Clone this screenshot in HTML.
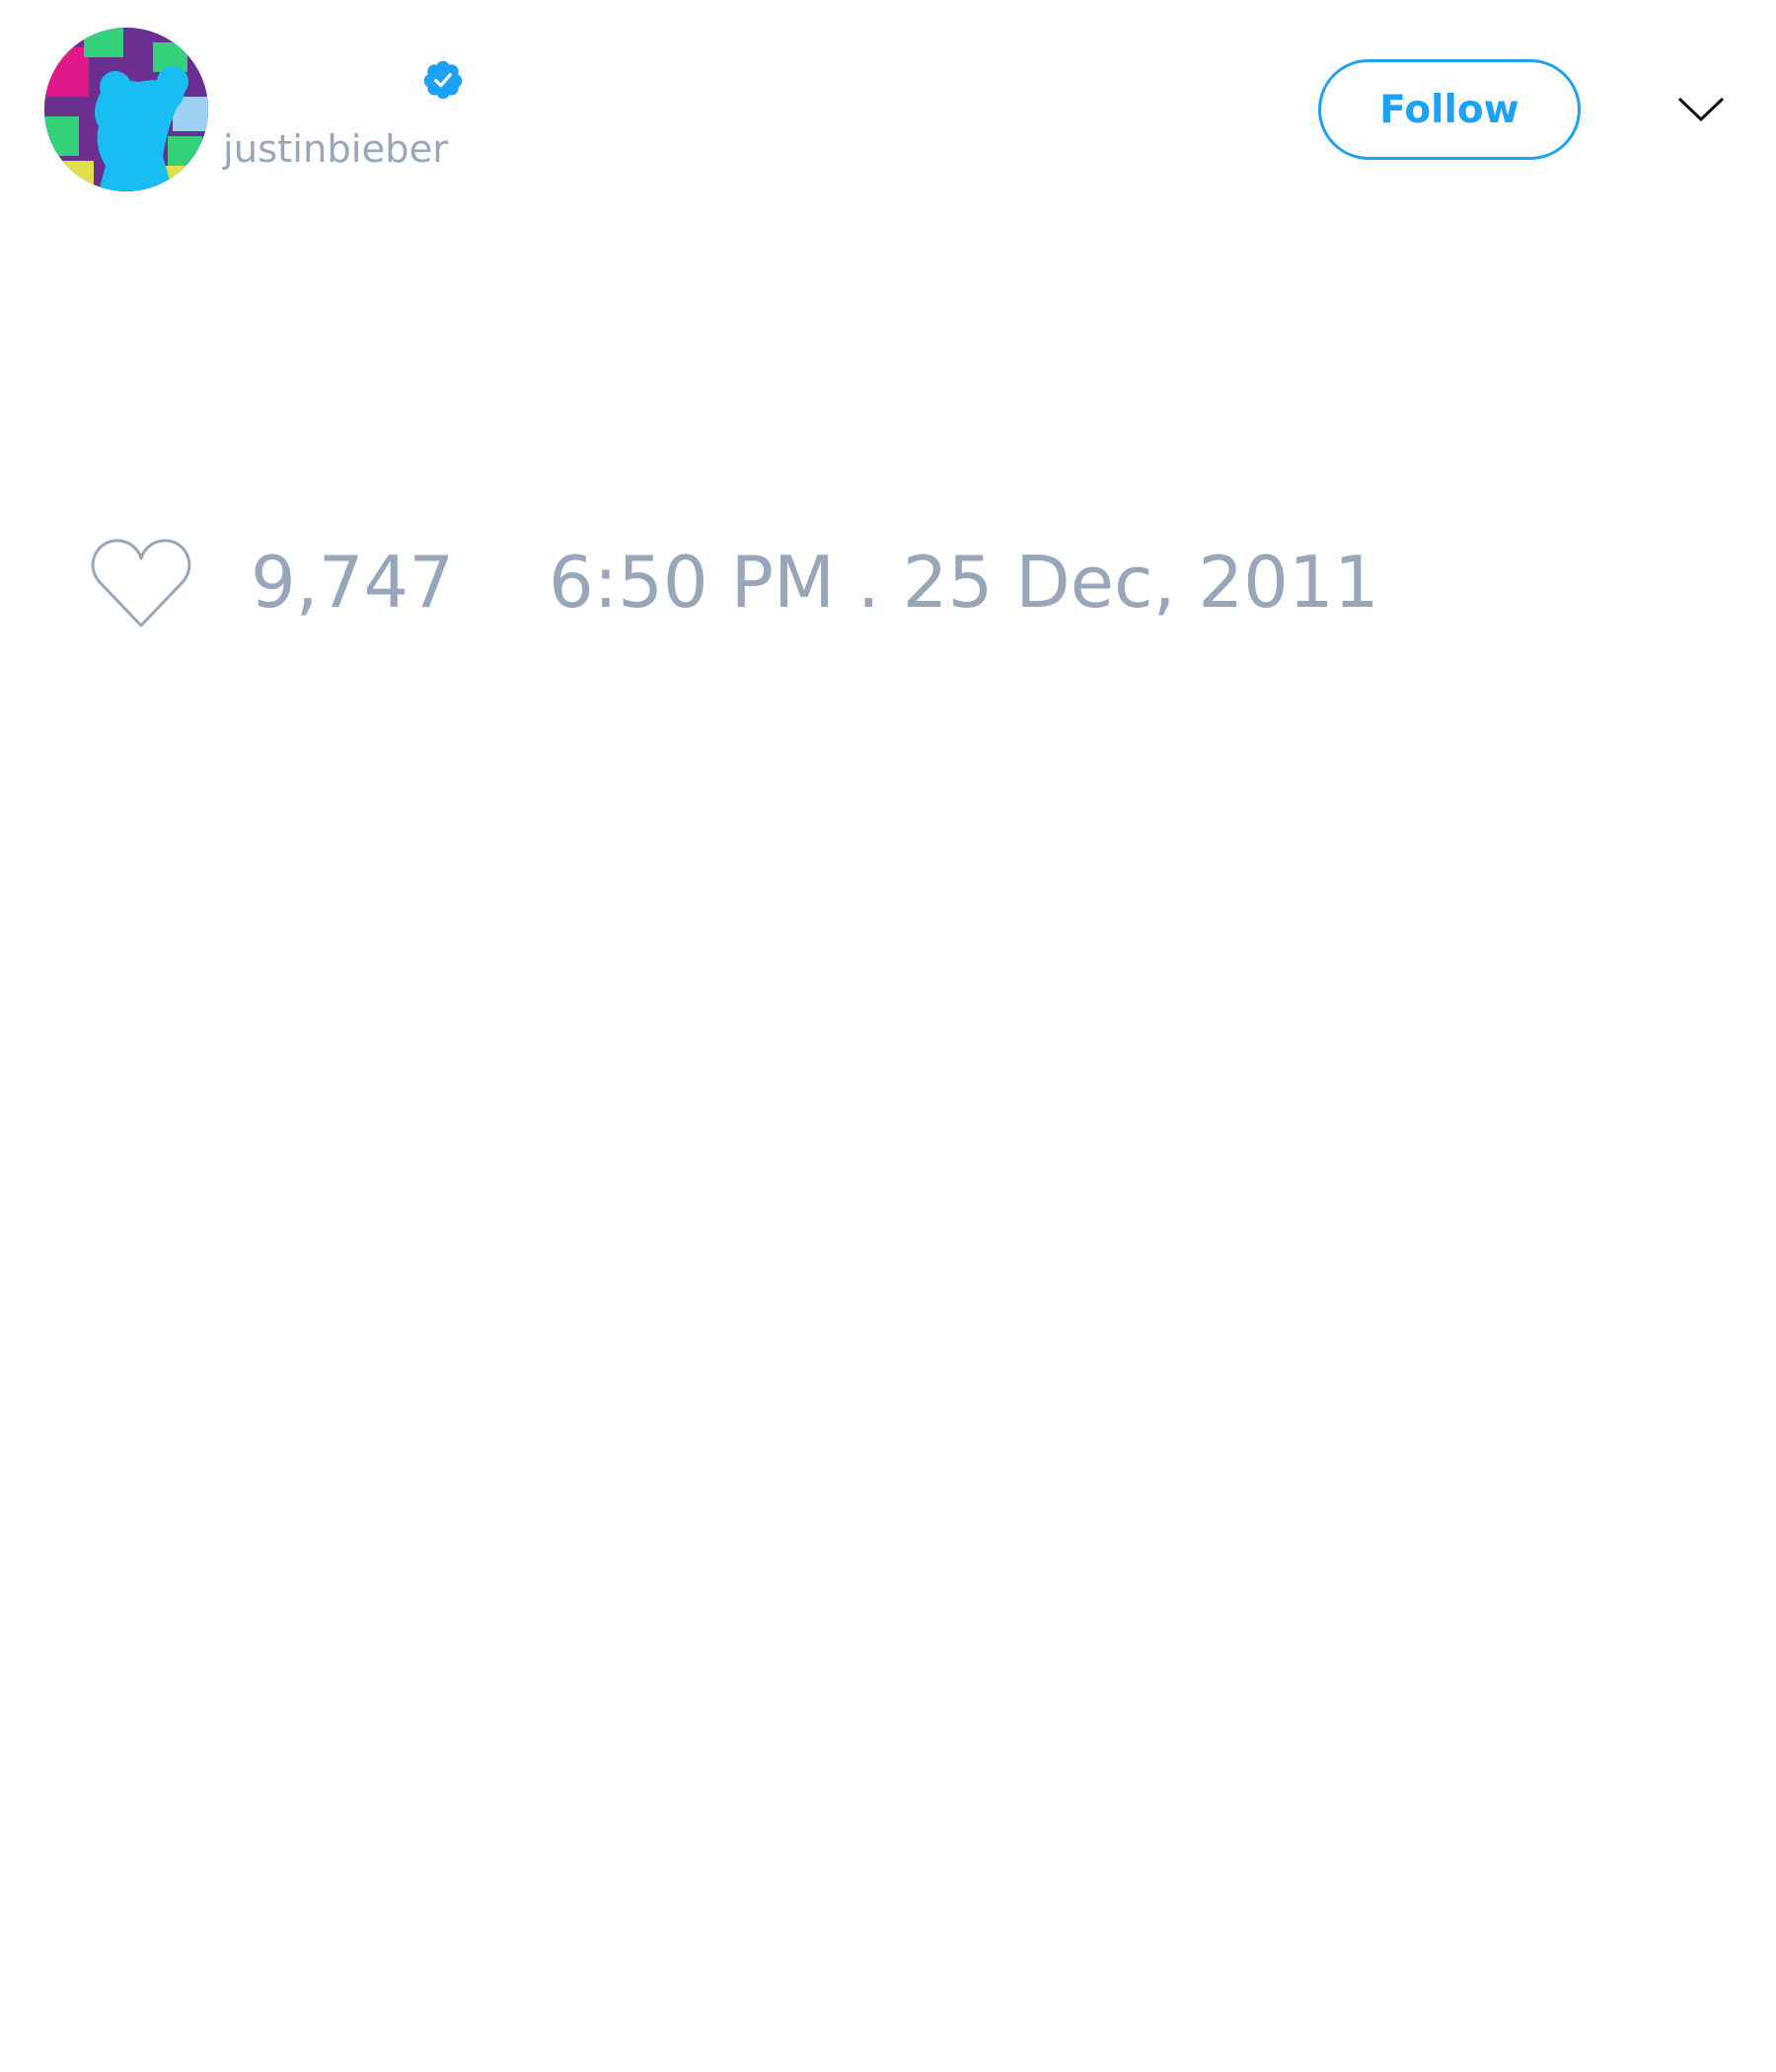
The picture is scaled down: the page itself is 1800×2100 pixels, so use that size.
<!DOCTYPE html>
<html><head><meta charset="utf-8"><style>
html,body{margin:0;padding:0;background:#fff;width:1800px;height:2100px;overflow:hidden;font-family:"DejaVu Sans","Liberation Sans",sans-serif;}
.av{position:absolute;left:45px;top:28px;width:166px;height:166px;border-radius:50%;overflow:hidden;background:#6a2f8f;}
.user{position:absolute;left:226px;top:129px;font-size:38.5px;color:#98a6b9;}
.btn{position:absolute;left:1336px;top:60px;width:260px;height:96px;border:3px solid #1da1f2;border-radius:51px;color:#1da1f2;font-weight:bold;font-size:39px;text-align:center;line-height:98px;}
.row{position:absolute;top:548px;font-size:72px;color:#98a6b9;}
</style></head><body>
<div class="av">
<svg width="166" height="166" viewBox="0 0 166 166">
<rect x="0" y="0" width="166" height="166" fill="#6a2f8f"/>
<rect x="0" y="20" width="45" height="50" fill="#e0188a"/>
<rect x="0" y="90" width="35" height="40" fill="#33d17a"/>
<rect x="40" y="0" width="40" height="30" fill="#33d17a"/>
<rect x="110" y="15" width="35" height="30" fill="#33d17a"/>
<rect x="130" y="70" width="36" height="35" fill="#9ed0f0"/>
<rect x="125" y="110" width="35" height="30" fill="#33d17a"/>
<rect x="15" y="135" width="35" height="25" fill="#e0e04a"/>
<rect x="120" y="140" width="30" height="26" fill="#e0e04a"/>
<path d="M60 60 Q70 50 95 55 Q120 50 140 58 Q145 70 135 80 Q125 100 120 130 L130 166 L55 166 L62 140 Q50 120 55 100 Q45 85 60 60Z" fill="#18bdf2"/>
<circle cx="72" cy="60" r="16" fill="#18bdf2"/><circle cx="130" cy="55" r="16" fill="#18bdf2"/>
</svg></div>
<svg style="position:absolute;left:427px;top:59px" width="44" height="44" viewBox="0 0 24 24"><path d="M22.5 12.5c0-1.58-.875-2.95-2.148-3.6.154-.435.238-.905.238-1.4 0-2.210-1.71-3.998-3.818-3.998-.47 0-.92.084-1.336.25C14.818 2.415 13.51 1.5 12 1.5s-2.816.917-3.437 2.25c-.415-.165-.866-.25-1.336-.25-2.11 0-3.818 1.790-3.818 4 0 .494.083.964.237 1.4-1.272.65-2.147 2.018-2.147 3.6 0 1.495.782 2.798 1.942 3.486-.02.17-.032.34-.032.514 0 2.210 1.708 4 3.818 4 .47 0 .92-.086 1.335-.25.62 1.334 1.926 2.25 3.437 2.25 1.512 0 2.818-.916 3.437-2.25.415.163.865.248 1.336.248 2.110 0 3.818-1.790 3.818-4 0-.174-.012-.344-.033-.513 1.158-.687 1.943-1.990 1.943-3.484z" fill="#1da1f2"/><path d="M8 12.3l2.8 2.8 5.2-6" stroke="#fff" stroke-width="1.8" fill="none" stroke-linecap="round" stroke-linejoin="round"/></svg>
<div class="user">justinbieber</div>
<div class="btn">Follow</div>
<svg style="position:absolute;left:1700px;top:96px" width="48" height="30" viewBox="0 0 48 30"><path d="M2 4 L24 25 L46 4" stroke="#111" stroke-width="3" fill="none"/></svg>
<svg style="position:absolute;left:91px;top:544px" width="104" height="94" viewBox="0 0 104 94"><path d="M52 90 L10 46 C-6 28 8 2 30 4 C42 5 50 14 52 22 C54 14 62 5 74 4 C96 2 110 28 94 46 Z" stroke="#98a6b9" stroke-width="3" fill="none" stroke-linejoin="round"/></svg>
<div class="row" style="left:254px">9,747</div>
<div class="row" style="left:556px">6:50 PM . 25 Dec, 2011</div>
</body></html>
